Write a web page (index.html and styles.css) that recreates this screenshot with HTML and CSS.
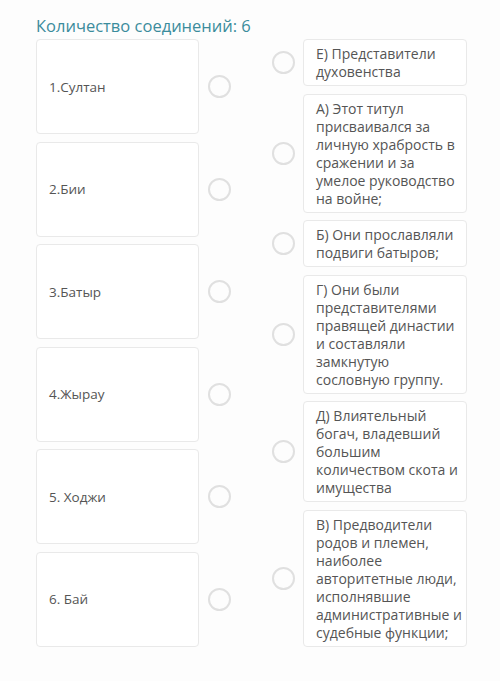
FILE: index.html
```html
<!DOCTYPE html>
<html lang="ru">
<head>
  <meta charset="UTF-8">
  <title>Соединения</title>
  <link rel="stylesheet" href="styles.css">
</head>
<body>
<div class="page">
  <h2 class="title">Количество соединений: 6</h2>

  <div class="board">
    <div class="column left">
      <div class="row">
        <div class="card term">1.Султан</div>
        <span class="dot"></span>
      </div>
      <div class="row">
        <div class="card term">2.Бии</div>
        <span class="dot"></span>
      </div>
      <div class="row">
        <div class="card term">3.Батыр</div>
        <span class="dot"></span>
      </div>
      <div class="row">
        <div class="card term">4.Жырау</div>
        <span class="dot"></span>
      </div>
      <div class="row">
        <div class="card term">5. Ходжи</div>
        <span class="dot"></span>
      </div>
      <div class="row">
        <div class="card term">6. Бай</div>
        <span class="dot"></span>
      </div>
    </div>

    <div class="column right">
      <div class="row">
        <span class="dot"></span>
        <div class="card answer">Е) Представители духовенства</div>
      </div>
      <div class="row">
        <span class="dot"></span>
        <div class="card answer">А) Этот титул присваивался за личную храбрость в сражении и за умелое руководство на войне;</div>
      </div>
      <div class="row">
        <span class="dot"></span>
        <div class="card answer">Б) Они прославляли подвиги батыров;</div>
      </div>
      <div class="row">
        <span class="dot"></span>
        <div class="card answer">Г) Они были представителями правящей династии и составляли замкнутую сословную группу.</div>
      </div>
      <div class="row">
        <span class="dot"></span>
        <div class="card answer">Д) Влиятельный богач, владевший большим количеством скота и имущества</div>
      </div>
      <div class="row">
        <span class="dot"></span>
        <div class="card answer">В) Предводители родов и племен, наиболее авторитетные люди, исполнявшие административные и судебные функции;</div>
      </div>
    </div>
  </div>
</div>
</body>
</html>
```

FILE: styles.css
```css
:root {
  --teal: #3b8c9c;
  --text: #555;
  --border: #e9e9e9;
  --dot: #e0e0e0;
}

* {
  margin: 0;
  padding: 0;
  box-sizing: border-box;
}

body {
  font-family: 'Open Sans', 'Noto Sans', sans-serif;
  background: #fdfdfd;
  color: var(--text);
}

.page {
  padding: 14px 0 0 36px;
}

.title {
  font-size: 16.5px;
  font-weight: 400;
  line-height: 24px;
  color: var(--teal);
  margin-bottom: 1px;
}

.board {
  display: flex;
  gap: 41px;
}

.column {
  display: flex;
  flex-direction: column;
  gap: 7.5px;
}

.row {
  display: flex;
  align-items: center;
  gap: 9px;
}

.right .row {
  gap: 8px;
}

.card {
  background: #fff;
  border: 1px solid var(--border);
  border-radius: 4px;
  font-size: 14px;
  line-height: 18px;
}

.term {
  width: 163px;
  height: 95px;
  padding: 0 12px;
  display: flex;
  align-items: center;
  font-size: 13.5px;
}

.answer {
  width: 164px;
  padding: 5px 4px 4px 12px;
}

.dot {
  width: 23px;
  height: 23px;
  border: 2px solid var(--dot);
  border-radius: 50%;
  flex-shrink: 0;
}
```
